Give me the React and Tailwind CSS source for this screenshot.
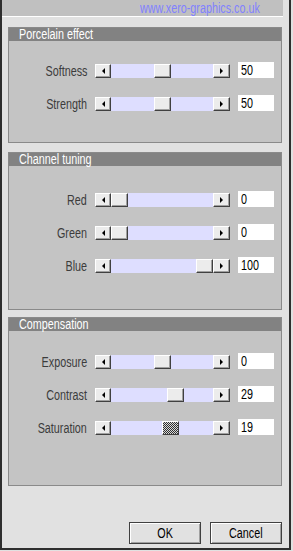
import React from 'react';

const font = { fontFamily: '"Liberation Sans", Arial, sans-serif' };

// the original uses a narrow face; squeeze Liberation Sans to its width
const Narrow = ({ className = '', children }) => (
  <span className={`inline-block whitespace-nowrap scale-x-[0.77] ${className}`}>{children}</span>
);

const Arrow = ({ dir }) => (
  <div
    className={`w-0 h-0 border-y-[3px] border-y-transparent ${
      dir === 'left' ? 'border-r-[3px] border-r-black' : 'border-l-[3px] border-l-black'
    }`}
  />
);

const RaisedBox = ({ className = '', children }) => (
  <div
    className={`flex items-center justify-center bg-[#ececec] border border-t-white border-l-white border-b-[#404040] border-r-[#404040] shadow-[inset_-1px_-1px_0_#a0a0a0] ${className}`}
  >
    {children}
  </div>
);

const Slider = ({ pos, focused }) => (
  <div className="flex h-[14px] w-[135px]">
    <RaisedBox className="w-[16px] h-[14px] shrink-0">
      <Arrow dir="left" />
    </RaisedBox>
    <div className="relative flex-1 bg-[#dedeff]">
      <div className="absolute top-0 h-[14px] w-[17px]" style={{ left: pos }}>
        {focused ? (
          <div className="h-full w-full border border-t-white border-l-white border-b-[#404040] border-r-[#404040] bg-[repeating-conic-gradient(#303030_0_25%,#d8d8d8_0_50%)] bg-[length:2px_2px]" />
        ) : (
          <RaisedBox className="h-full w-full" />
        )}
      </div>
    </div>
    <RaisedBox className="w-[17px] h-[14px] shrink-0">
      <Arrow dir="right" />
    </RaisedBox>
  </div>
);

const Row = ({ label, value, pos, focused }) => (
  <div className="flex items-center h-[14px]">
    <div className="w-[79px] pr-[1px] text-right text-[14px] leading-none text-[#3c3c3c]">
      <Narrow className="origin-right">{label}</Narrow>
    </div>
    <div className="ml-[7px]">
      <Slider pos={pos} focused={focused} />
    </div>
    <div className="ml-[8px] -mt-[2px] w-[36px] h-[16px] bg-white text-[14px] leading-[16px] pl-[3px] text-black">
      <Narrow className="origin-left">{value}</Narrow>
    </div>
  </div>
);

const Group = ({ title, rows, pt, pb }) => (
  <div className="ml-[6px] w-[274px] border border-[#8a8a8a] bg-[#c4c4c4]">
    <div className="h-[13px] bg-[#828282] text-white text-[14px] leading-[13px] pl-[10px]">
      <Narrow className="origin-left">{title}</Narrow>
    </div>
    <div className="flex flex-col gap-[19px]" style={{ paddingTop: pt, paddingBottom: pb }}>
      {rows.map((r) => (
        <Row key={r.label} {...r} />
      ))}
    </div>
  </div>
);

const DlgButton = ({ children }) => (
  <button className="w-[72px] h-[22px] border border-[#404040] bg-[#e1e1e1] shadow-[inset_1px_1px_0_#ffffff,inset_-1px_-1px_0_#a0a0a0] text-[14px] leading-none text-black">
    <Narrow>{children}</Narrow>
  </button>
);

export default function App() {
  return (
    <div className="w-[293px] h-[551px] bg-[#e1e1e1] pr-[2px] pb-[1px]" style={font}>
      <div className="h-full flex flex-col border-l-2 border-r-2 border-b-2 border-[#2e2e2e]">
        <div className="h-[17px] w-[281px] bg-[#c0c0c0] border-b border-white text-[14px] leading-[17px] text-[#8080ff] pl-[138px]">
          <Narrow className="origin-left">www.xero-graphics.co.uk</Narrow>
        </div>
        <div className="h-[10px]" />
        <Group
          title="Porcelain effect"
          pt={23}
          pb={31}
          rows={[
            { label: 'Softness', value: '50', pos: 43 },
            { label: 'Strength', value: '50', pos: 43 },
          ]}
        />
        <div className="h-[9px]" />
        <Group
          title="Channel tuning"
          pt={27}
          pb={36}
          rows={[
            { label: 'Red', value: '0', pos: 0 },
            { label: 'Green', value: '0', pos: 0 },
            { label: 'Blue', value: '100', pos: 85 },
          ]}
        />
        <div className="h-[7px]" />
        <Group
          title="Compensation"
          pt={24}
          pb={50}
          rows={[
            { label: 'Exposure', value: '0', pos: 43 },
            { label: 'Contrast', value: '29', pos: 56 },
            { label: 'Saturation', value: '19', pos: 51, focused: true },
          ]}
        />
        <div className="flex-1" />
        <div className="flex justify-end gap-[9px] pr-[7px] pb-[4px]">
          <DlgButton>OK</DlgButton>
          <DlgButton>Cancel</DlgButton>
        </div>
      </div>
    </div>
  );
}
